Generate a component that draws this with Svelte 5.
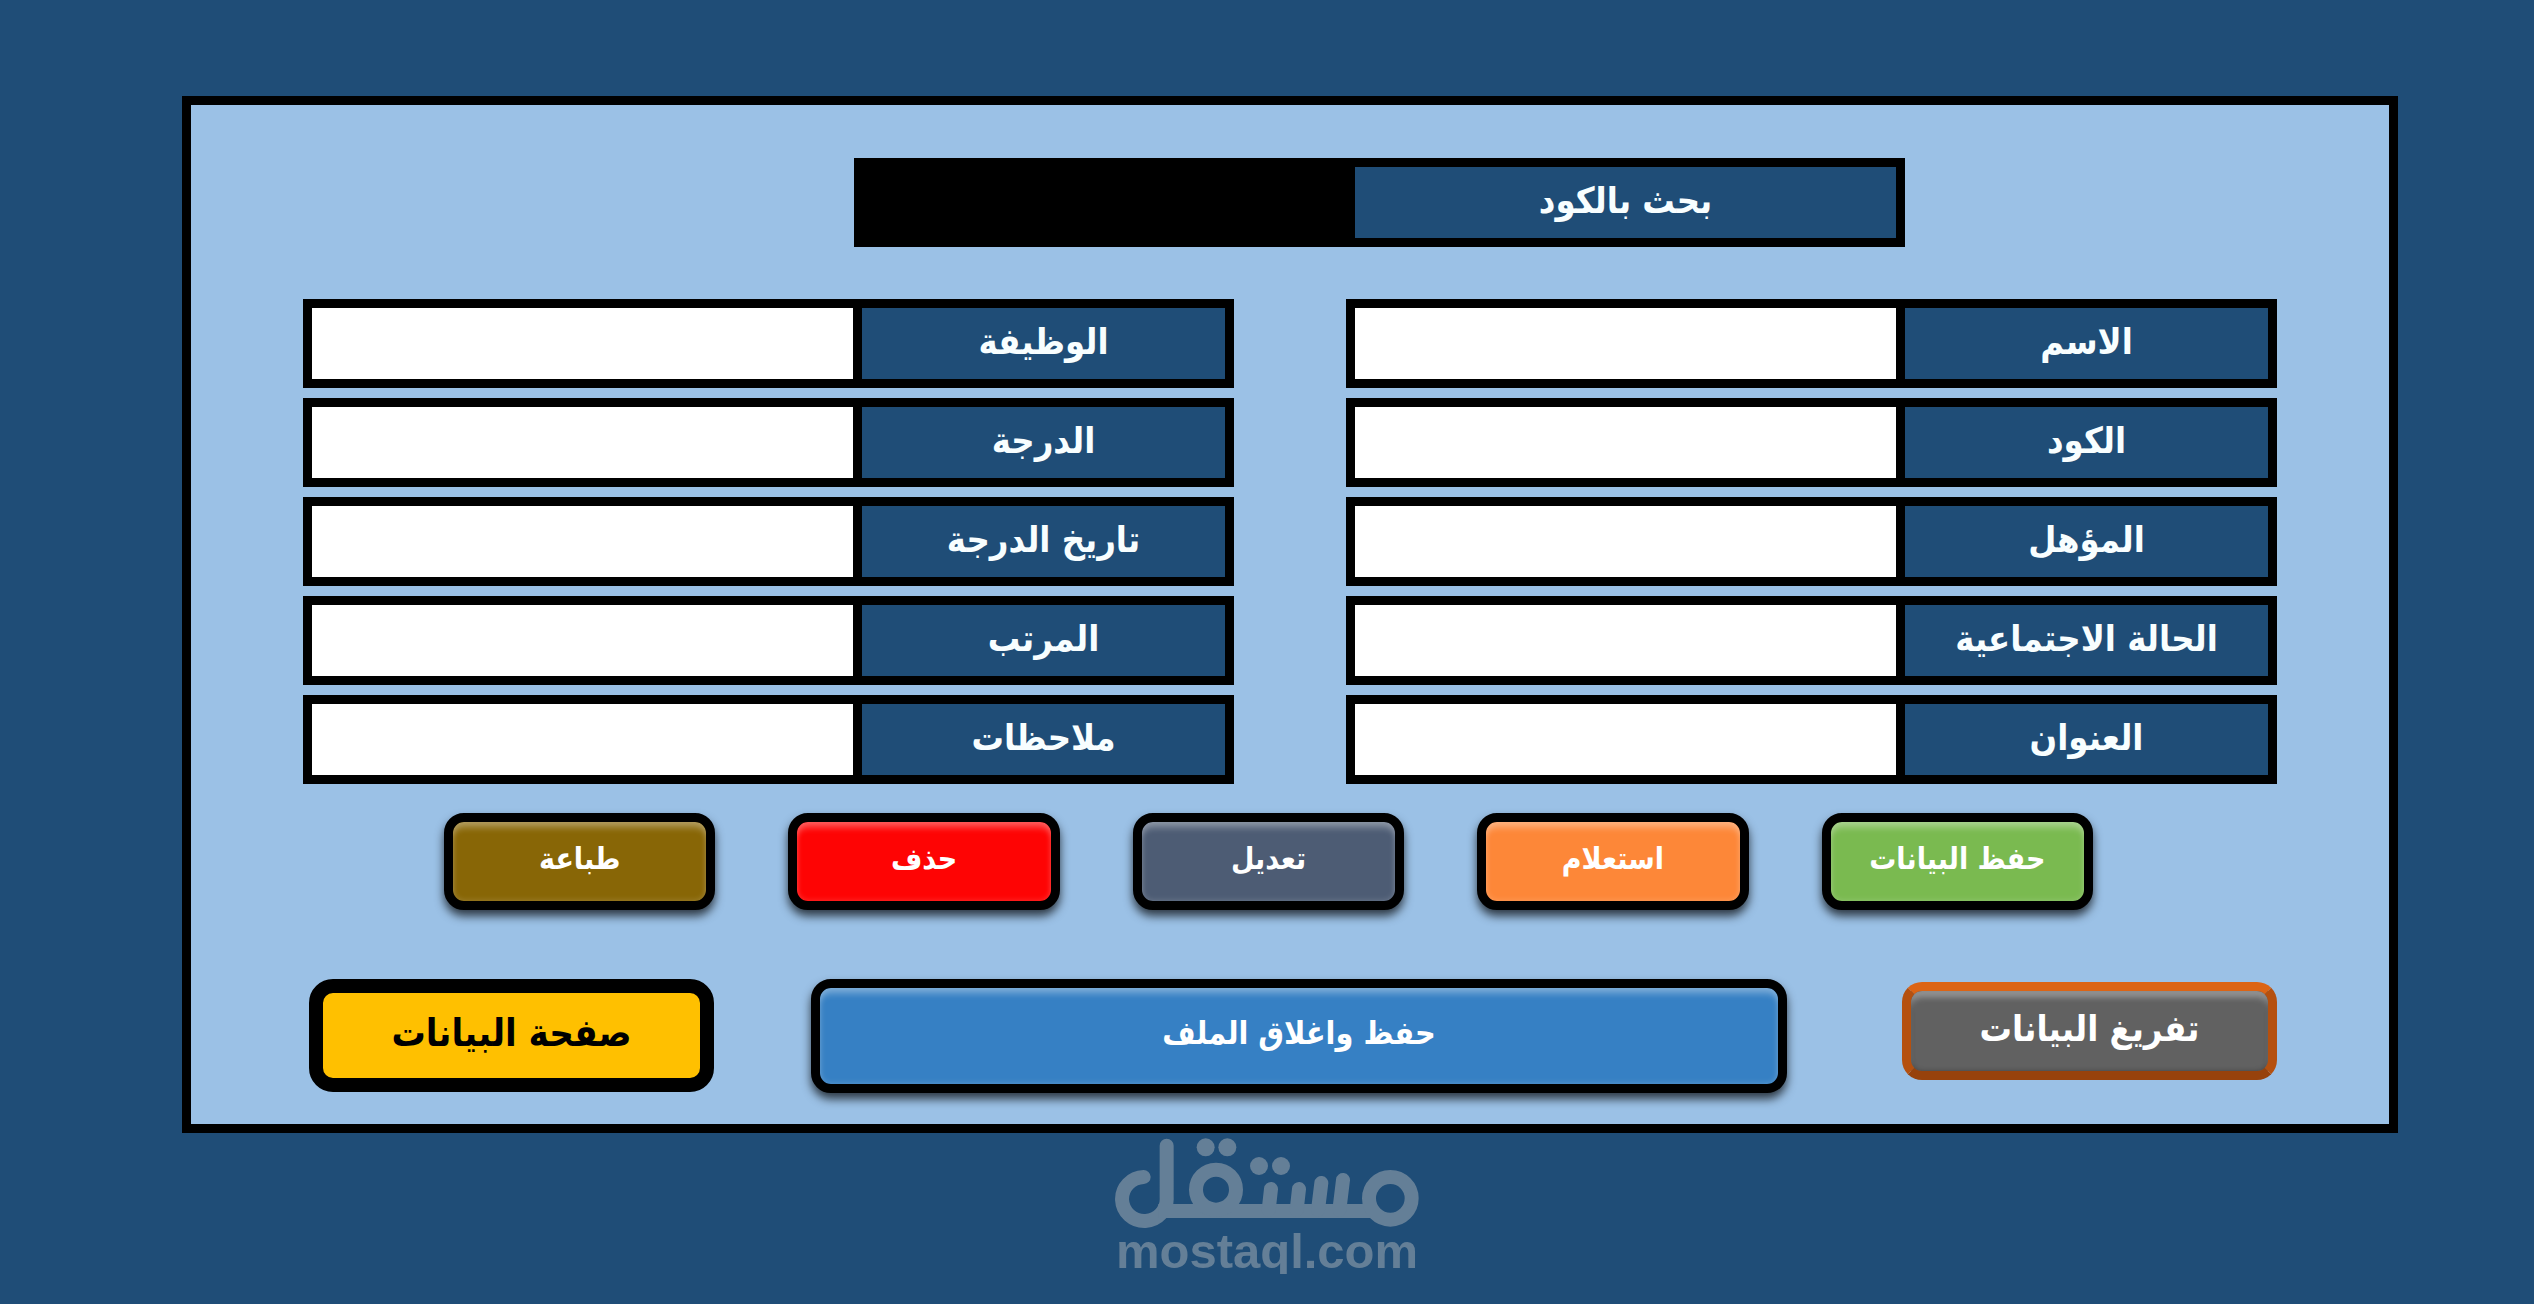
<script>
  const columns = [
    [
      { id: "name", label: "الاسم" },
      { id: "code", label: "الكود" },
      { id: "degree", label: "المؤهل" },
      { id: "status", label: "الحالة الاجتماعية" },
      { id: "address", label: "العنوان" }
    ],
    [
      { id: "job", label: "الوظيفة" },
      { id: "grade", label: "الدرجة" },
      { id: "grade-date", label: "تاريخ الدرجة" },
      { id: "salary", label: "المرتب" },
      { id: "notes", label: "ملاحظات" }
    ]
  ];

  const actions = [
    { name: "save", text: "حفظ البيانات" },
    { name: "query", text: "استعلام" },
    { name: "edit", text: "تعديل" },
    { name: "delete", text: "حذف" },
    { name: "print", text: "طباعة" }
  ];
</script>

<style>
  :global(body) {
    margin: 0;
    background: #1f4d77;
  }

  .page {
    direction: rtl;
    padding-top: 96px;
    font-family: "DejaVu Sans Condensed", "DejaVu Sans", sans-serif;
  }

  .page * {
    box-sizing: border-box;
  }

  .panel {
    margin: 0 136px 0 182px;
    border: 9px solid #000;
    background: #9bc1e6;
    padding: 53px 112px 31px;
  }

  .search {
    display: grid;
    grid-template-columns: 372fr 1051fr 551fr;
    margin-bottom: 52px;
  }

  .search .field {
    grid-column: 2;
  }

  .search label {
    flex: 541;
  }

  .search input {
    flex: 483;
    background: #000;
    color: #fff;
  }

  .columns {
    display: grid;
    grid-template-columns: 1fr 1fr;
    column-gap: 112px;
  }

  .column {
    display: flex;
    flex-direction: column;
    gap: 10px;
  }

  .field {
    display: flex;
    gap: 9px;
    height: 89px;
    border: 9px solid #000;
    background: #000;
  }

  label {
    display: flex;
    flex: 363;
    align-items: center;
    justify-content: center;
    min-width: 0;
    padding-bottom: 4px;
    background: #1f4d77;
    color: #f8feff;
    font-size: 36px;
    font-weight: bold;
    white-space: nowrap;
  }

  input {
    flex: 541;
    min-width: 0;
    border: 0;
    border-radius: 0;
    padding: 0;
    background: #fff;
    font: inherit;
    font-size: 36px;
    text-align: center;
  }

  button {
    border: 9px solid #000;
    border-radius: 20px;
    padding: 0 0 6px;
    color: #fff;
    font-family: inherit;
    font-size: 30px;
    font-weight: bold;
    white-space: nowrap;
    cursor: pointer;
  }

  .raised {
    box-shadow:
      0 6px 10px rgba(0, 0, 0, 0.7),
      inset 0 8px 6px -2px rgba(255, 255, 255, 0.28),
      inset 0 0 6px rgba(255, 255, 255, 0.2);
  }

  .actions {
    display: grid;
    grid-template-columns: repeat(5, 1fr);
    gap: 73px;
    margin: 29px 184px 69px 141px;
  }

  .actions button {
    height: 97px;
  }

  .save {
    background: #7aba50;
  }

  .query {
    background: #fd8738;
  }

  .edit {
    background: #4d5c74;
  }

  .delete {
    background: #fe0404;
  }

  .print {
    background: #886606;
  }

  .footer {
    display: grid;
    grid-template-columns: 393fr 976fr 405fr;
    column-gap: 97px;
    align-items: start;
    padding-left: 6px;
  }

  .footer .clear {
    height: 98px;
    margin: 3px 0 0 18px;
    border-color: #dc6414 #b5500f #97420c;
    background: #616161;
    box-shadow:
      inset 0 8px 6px -2px rgba(255, 255, 255, 0.35),
      inset 0 0 5px rgba(0, 0, 0, 0.3);
    font-size: 36px;
  }

  .footer .close {
    height: 114px;
    background: #3680c4;
    font-size: 32px;
  }

  .footer .sheet {
    height: 113px;
    border-width: 14px;
    border-radius: 24px;
    background: #ffc000;
    color: #000;
    font-size: 38px;
  }

  .brand {
    display: flex;
    flex-direction: column;
    align-items: center;
    padding-top: 5px;
    color: #647f97;
    font-family: "Liberation Sans", sans-serif;
    font-size: 49px;
    font-weight: bold;
    line-height: 46px;
  }

  .brand svg {
    width: 304px;
    height: 90px;
  }
</style>

<main class="page">
  <section class="panel">
    <div class="search">
      <div class="field">
        <label for="search">بحث بالكود</label>
        <input id="search" type="text" />
      </div>
    </div>

    <div class="columns">
      {#each columns as fields}
        <div class="column">
          {#each fields as field}
            <div class="field">
              <label for={field.id}>{field.label}</label>
              <input id={field.id} type="text" />
            </div>
          {/each}
        </div>
      {/each}
    </div>

    <div class="actions">
      {#each actions as action}
        <button type="button" class="raised {action.name}">{action.text}</button>
      {/each}
    </div>

    <div class="footer">
      <button type="button" class="clear">تفريغ البيانات</button>
      <button type="button" class="raised close">حفظ واغلاق الملف</button>
      <button type="button" class="sheet">صفحة البيانات</button>
    </div>
  </section>

  <footer class="brand">
    <svg viewBox="105 84 912 270" role="img" aria-label="مستقل">
      <g fill="none" stroke="currentColor" stroke-width="42" stroke-linecap="round">
        <path d="M260 107V263A67 66 0 1 1 191 201" />
        <path d="M235 303H890" stroke-linecap="butt" />
        <circle cx="408" cy="239" r="60" />
        <circle cx="931" cy="265" r="64" />
        <path d="M573 237L566 300M657 237L650 300M724 219L714 300M789 210L778 300" />
      </g>
      <g fill="currentColor">
        <circle cx="377" cy="112" r="27" />
        <circle cx="442" cy="112" r="27" />
        <circle cx="537" cy="168" r="27" />
        <circle cx="603" cy="168" r="27" />
      </g>
    </svg>
    <span dir="ltr">mostaql.com</span>
  </footer>
</main>
